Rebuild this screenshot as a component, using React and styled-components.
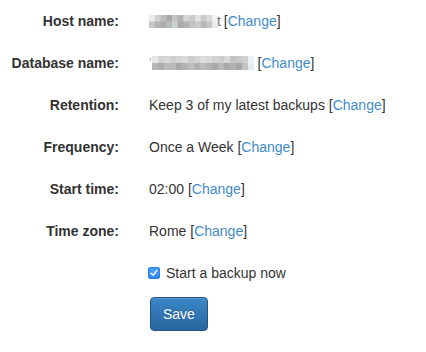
import React from "react";
import styled, { createGlobalStyle } from "styled-components";

const GlobalStyle = createGlobalStyle`
	body {
		margin: 0;
		background: #fff;
		font-family: "Liberation Sans", Arial, Helvetica, sans-serif;
		font-size: 14px;
		line-height: 20px;
		color: #333;
	}
`;

const StyledForm = styled.form`
	padding-top: 11px;
	display: grid;
	grid-template-columns: 119px 1fr;
	column-gap: 30px;
	row-gap: 22px;
`;

const StyledLabel = styled.label`
	font-weight: bold;
	text-align: right;
	white-space: nowrap;
`;

const StyledValue = styled.div`
	display: flex;
	align-items: center;
	white-space: nowrap;
	height: 20px;
`;

const StyledLink = styled.a`
	color: #428bca;
	text-decoration: none;
`;

const StyledFaded = styled.span`
	color: ${(p) => p.$color || "#333"};
	margin-left: ${(p) => p.$shift || 0}px;
	margin-right: ${(p) => p.$shift || 0}px;
`;

const StyledActions = styled.div`
	grid-column: 2;
	display: flex;
	flex-flow: column nowrap;
	align-items: flex-start;
	gap: 14px;
`;

const StyledCheckRow = styled.label`
	display: flex;
	align-items: center;
	gap: 6px;
	height: 20px;
	margin-left: -1px;
	cursor: pointer;
`;

const StyledCheckBox = styled.span`
	width: 12px;
	height: 12px;
	border-radius: 3px;
	background: linear-gradient(#4aa3fb, #2c86f2);
	box-shadow: inset 0 0 0 1px #2a7fe0;
	display: flex;
	align-items: center;
	justify-content: center;
`;

const StyledButton = styled.button`
	font-family: inherit;
	font-size: 14px;
	line-height: 20px;
	padding: 6px 12px;
	margin-left: 1px;
	color: #fff;
	text-shadow: 0 -1px 0 rgba(0, 0, 0, 0.2);
	background: linear-gradient(#3a87c8, #2a65a0);
	border: 1px solid #245580;
	border-radius: 4px;
	box-shadow: inset 0 1px 0 rgba(255, 255, 255, 0.15);
	cursor: pointer;
`;

const hostMosaic = [
	["#ececec", "#cfcfcf", "#bdbdbd", "#a9a9a9", "#c4c4c4", "#b4b4b4", "#d6d6d6", "#cbcbcb", "#e2e2e2", "#c9c9c9", "#dadada", "#f3f3f3"],
	["#c6c6c6", "#b3b3b3", "#acacac", "#bababa", "#c9d1d5", "#ababab", "#b2b2b2", "#c1c1c1", "#cacaca", "#b8b8b8", "#c6c6c6", "#ececec"],
];

const dbMosaic = [
	["#e4e6e8", "#d4d4d4", "#d8d8d8", "#cfcfcf", "#d6d6d6", "#dadada", "#cbcbcb", "#d4d4d4", "#dcdcdc", "#d9d9d9", "#d2d2d2", "#cdcdcd", "#d8d8d8", "#c4c4c4", "#c9c9c9", "#d0d0d0", "#eef2f6"],
	["#b6b6b6", "#adadad", "#bbbbbb", "#b9b9b9", "#a8a8a8", "#b4b4b4", "#bdbdbd", "#b0b0b0", "#bcbcbc", "#b3b3b3", "#aaaaaa", "#b7b7b7", "#a9a9a9", "#b1b1b1", "#a7a7a7", "#c3c3c3", "#e6ecf2"],
];

const Mosaic = ({ rows, cell, height }) => {
	const cols = rows[0].length;
	const half = height / 2;
	return (
		<svg width={cols * cell} height={height} style={{ display: "block" }}>
			{rows.map((row, r) =>
				row.map((c, i) => (
					<rect key={`${r}-${i}`} x={i * cell} y={r * half} width={cell + 0.5} height={half + 0.5} fill={c} />
				))
			)}
		</svg>
	);
};

const Change = () => (
	<>
		&nbsp;[<StyledLink href="#">Change</StyledLink>]
	</>
);

const rows = [
	{
		label: "Host name:",
		value: (
			<>
				<Mosaic rows={hostMosaic} cell={5.75} height={13} />
				<StyledFaded $color="#777" $shift={-1}>t</StyledFaded>
			</>
		),
	},
	{
		label: "Database name:",
		value: (
			<>
				<StyledFaded $color="#bbb">'</StyledFaded>
				<Mosaic rows={dbMosaic} cell={6} height={14} />
			</>
		),
	},
	{ label: "Retention:", value: "Keep 3 of my latest backups" },
	{ label: "Frequency:", value: "Once a Week" },
	{ label: "Start time:", value: "02:00" },
	{ label: "Time zone:", value: "Rome" },
];

const App = () => (
	<>
		<GlobalStyle />
		<StyledForm onSubmit={(e) => e.preventDefault()}>
			{rows.map((row) => (
				<React.Fragment key={row.label}>
					<StyledLabel>{row.label}</StyledLabel>
					<StyledValue>
						{row.value}
						<Change />
					</StyledValue>
				</React.Fragment>
			))}
			<StyledActions>
				<StyledCheckRow>
					<StyledCheckBox>
						<svg width="8" height="8" viewBox="0 0 8 8">
							<path d="M1.2 4.2 L3.2 6.2 L6.8 1.6" fill="none" stroke="#fff" strokeWidth="1.5" strokeLinecap="round" strokeLinejoin="round" />
						</svg>
					</StyledCheckBox>
					Start a backup now
				</StyledCheckRow>
				<StyledButton type="submit">Save</StyledButton>
			</StyledActions>
		</StyledForm>
	</>
);

export default App;
